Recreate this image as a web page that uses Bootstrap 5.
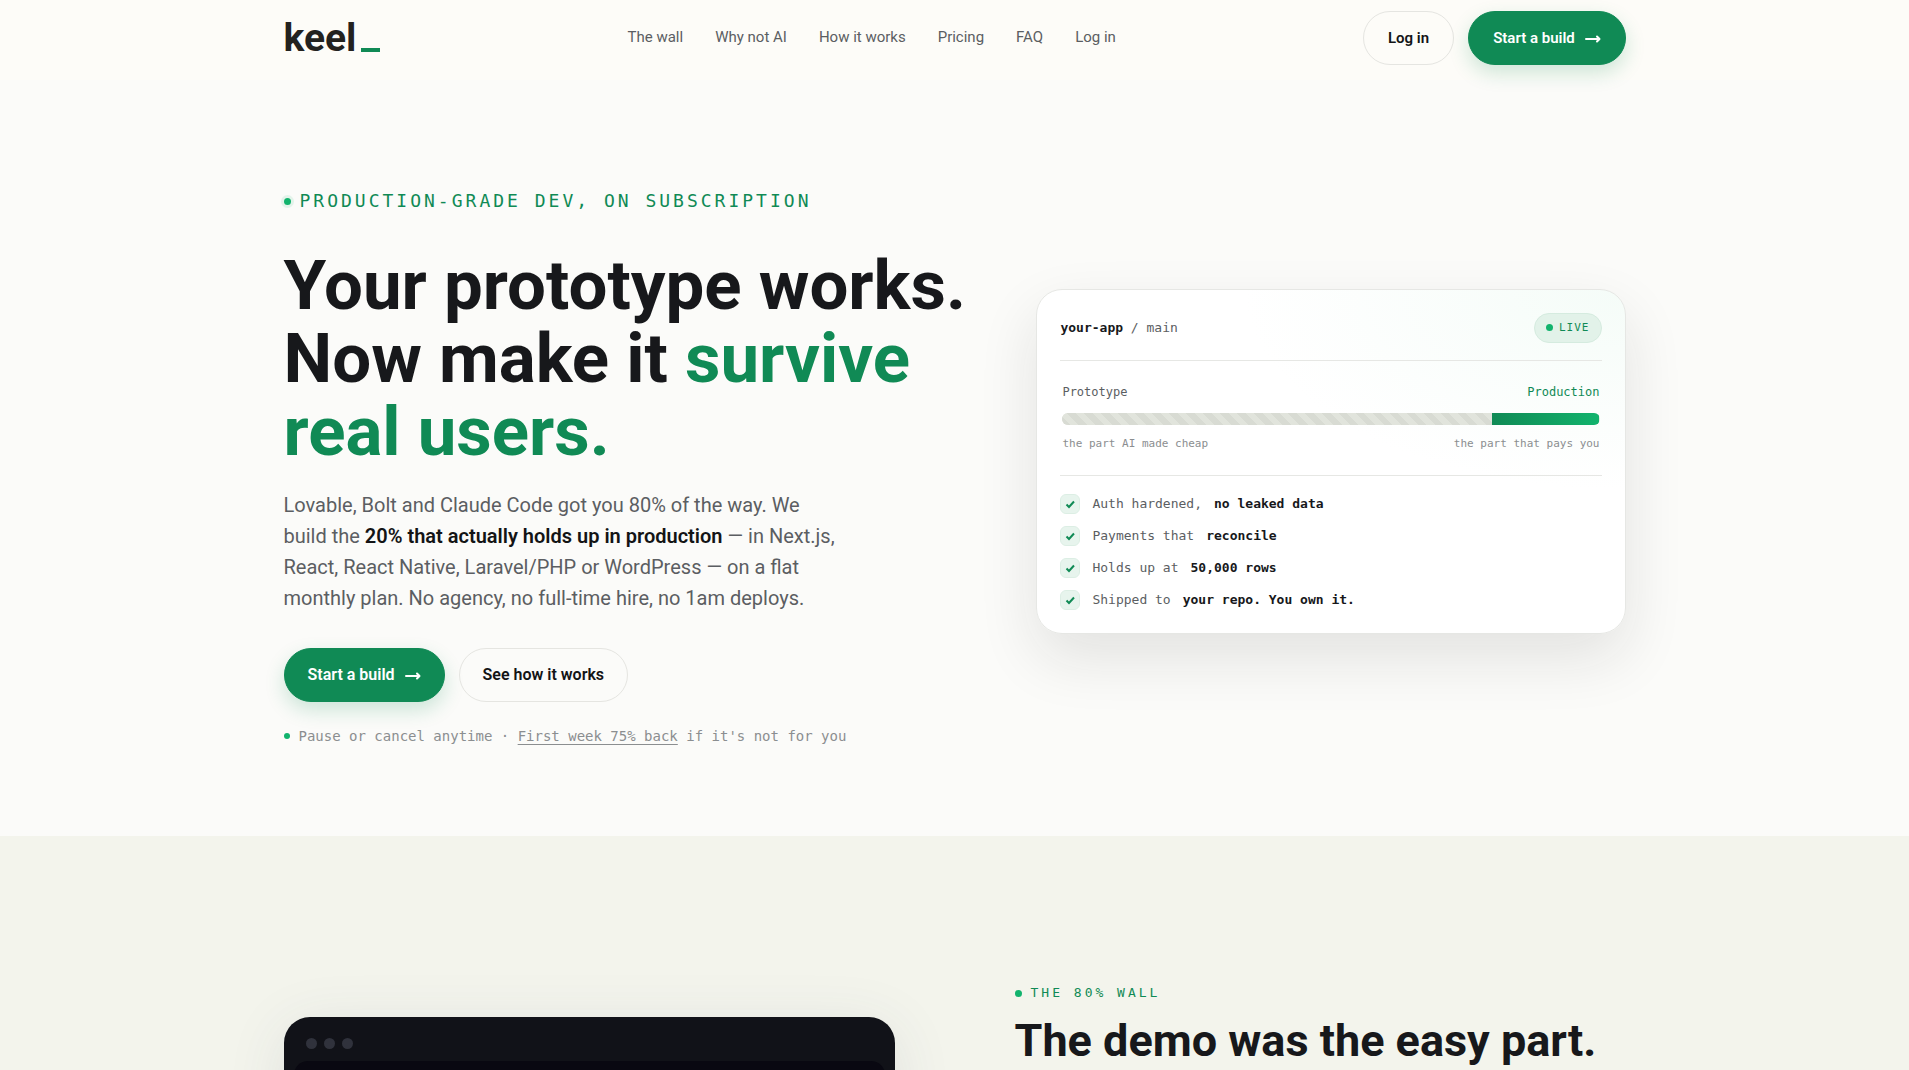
<!DOCTYPE html>
<html lang="en">
<head>
<meta charset="utf-8">
<meta name="viewport" content="width=device-width, initial-scale=1">
<title>keel_</title>
<link href="https://cdn.jsdelivr.net/npm/bootstrap@5.3.0/dist/css/bootstrap.min.css" rel="stylesheet">
<style>
:root { --ink: #17181b; --green: #108a55; --mint: #12b36d; --grey: #5b5e62; --soft: #8b8e90; --line: #e6e7e4; --mono: "DejaVu Sans Mono", "Liberation Mono", monospace; --sans: Roboto, "Open Sans", sans-serif; }
body { font-family: var(--sans); background: #fbfbf9; color: var(--ink); min-height: 100vh; }
.wrap { width: 100%; max-width: 1390px; margin-inline: auto; padding-inline: 24px; }
.topbar { background: #fdfcf8; padding: 11px 0 15px; }
.brand { font-size: 39px; line-height: 54px; font-weight: 700; color: #23221f; text-decoration: none; }
.brand-dash { width: 19px; height: 4px; background: var(--green); margin: 0 0 13px 5px; }
.menu { gap: 32px; padding-bottom: 2px; }
.menu a { font-size: 15px; line-height: 24px; color: var(--grey); text-decoration: none; }
.pill { --bs-btn-padding-x: 24px; --bs-btn-padding-y: 14px; --bs-btn-font-size: 15px; --bs-btn-font-weight: 600; --bs-btn-line-height: 24px; --bs-btn-border-radius: 27px; --bs-btn-color: #131415; --bs-btn-border-color: #e5e5e1; --bs-btn-hover-border-color: #b9bab5; }
.pill-green { --bs-btn-color: #fff; --bs-btn-bg: #108a55; --bs-btn-border-color: #108a55; --bs-btn-hover-color: #fff; --bs-btn-hover-bg: #0d7748; box-shadow: 0 8px 20px rgba(16, 138, 85, .2); }
.pill svg { width: 16px; height: 10px; margin-left: 6px; }
.hero { padding: 95px 0 89px; }
.hero .pill { --bs-btn-font-size: 16px; --bs-btn-padding-x: 23px; }
.hero-grid { display: grid; grid-template-columns: 690fr 590fr; gap: 64px; align-items: center; }
.eyebrow { font-family: var(--mono); font-size: 18px; line-height: 30px; letter-spacing: 3px; color: var(--green); gap: 9px; padding-block: 11px; }
.eyebrow-small { font-size: 13px; line-height: 20px; gap: 9px; padding: 0; }
.dot { width: 7px; height: 7px; border-radius: 50%; background: var(--mint); flex: none; }
.halo { box-shadow: 0 0 0 3px #e3f3ea; }
.dot-note { width: 6px; height: 6px; }
h1 { font-size: 69px; line-height: 73px; font-weight: 700; margin: 22px 0 0; }
h1 em { font-style: normal; color: var(--green); }
.intro { font-size: 20px; line-height: 31px; color: var(--grey); margin: 22px 0 0; }
.intro strong { color: #131415; font-weight: 600; }
.cta { gap: 14px; margin-top: 34px; }
.note { font-family: var(--mono); font-size: 14px; line-height: 22px; color: var(--soft); gap: 9px; margin-top: 23px; }
.note a { color: inherit; text-underline-offset: 3px; }
.status { border: 1px solid var(--line); border-radius: 26px; padding: 23px; font-family: var(--mono); background: radial-gradient(380px 200px at 100% 0, #f5fcf8, #fff); box-shadow: 0 24px 60px rgba(23, 24, 27, .11); }
.status-head { padding-bottom: 17px; border-bottom: 1px solid var(--line); font-size: 13px; line-height: 20px; color: var(--grey); }
.status-head b { color: var(--ink); }
.live { font-size: 11px; line-height: 18px; letter-spacing: 1px; color: var(--green); background: #e2f2e9; border: 1px solid #d5ebdf; border-radius: 15px; padding: 5px 11px; gap: 6px; }
.split { padding: 21px 2px 22px; border-bottom: 1px solid var(--line); font-size: 12px; line-height: 20px; color: var(--grey); }
.split b { font-weight: 400; color: var(--green); }
.meter { height: 12px; border-radius: 6px; margin: 11px 0 10px; background: #e3e6de; }
.meter-old { background: repeating-linear-gradient(45deg, #d8dbd3 0 6px, #e1e4dc 6px 12px); }
.meter-new { background: linear-gradient(90deg, #108a55, #12b36d); }
.split small { font-size: 11px; line-height: 18px; color: var(--soft); }
.checks { gap: 12px; padding-top: 18px; font-size: 13px; line-height: 20px; color: var(--grey); }
.checks li { gap: 12px; }
.checks b { color: var(--ink); }
.checks svg { width: 20px; height: 20px; flex: none; }
.wall { background: #f3f4ec; padding: 147px 0 96px; }
.wall-grid { display: grid; grid-template-columns: 1fr 1fr; gap: 120px; }
.terminal { background: #111218; border-radius: 26px; margin-top: 34px; padding: 21px 10px 10px; min-height: 240px; box-shadow: 0 10px 60px rgba(60, 70, 110, .1); }
.lights { gap: 7px; padding: 0 12px; }
.lights i { width: 11px; height: 11px; border-radius: 50%; background: #30323c; }
.screen { background: #090811; border-radius: 14px; margin-top: 12px; flex: 1; }
h2 { font-size: 45px; line-height: 52px; font-weight: 700; margin: 12px 0 0; }
@media (max-width: 991px) { .hero-grid, .wall-grid { grid-template-columns: 1fr; } .menu { display: none !important; } h1 { font-size: 44px; line-height: 50px; } .intro br { display: none; } }
</style>
</head>
<body>
<header class="topbar">
  <div class="wrap d-flex justify-content-between align-items-center">
    <a class="brand d-flex align-items-end" href="#">keel<span class="brand-dash"></span></a>
    <nav class="menu d-flex" aria-label="Main">
      <a href="#wall">The wall</a><a href="#why">Why not AI</a><a href="#how">How it works</a><a href="#pricing">Pricing</a><a href="#faq">FAQ</a><a href="#login">Log in</a>
    </nav>
    <div class="d-flex cta mt-0">
      <button class="btn pill" type="button">Log in</button>
      <button class="btn pill pill-green" type="button">Start a build <svg viewBox="0 0 16 10" fill="none" stroke="currentColor" stroke-width="2" stroke-linecap="round" stroke-linejoin="round" aria-hidden="true"><path d="M1 5h13M12 2.500l2.500 2.500-2.500 2.500"/></svg></button>
    </div>
  </div>
</header>
<main>
  <section class="hero">
    <div class="wrap hero-grid">
      <div>
        <div class="eyebrow d-flex align-items-center"><span class="dot halo"></span>PRODUCTION-GRADE DEV, ON SUBSCRIPTION</div>
        <h1>Your prototype works.<br>Now make it <em>survive<br>real users.</em></h1>
        <p class="intro">Lovable, Bolt and Claude Code got you 80% of the way. We<br>build the <strong>20% that actually holds up in production</strong> — in Next.js,<br>React, React Native, Laravel/PHP or WordPress — on a flat<br>monthly plan. No agency, no full-time hire, no 1am deploys.</p>
        <div class="cta d-flex flex-wrap">
          <button class="btn pill pill-green" type="button">Start a build <svg viewBox="0 0 16 10" fill="none" stroke="currentColor" stroke-width="2" stroke-linecap="round" stroke-linejoin="round" aria-hidden="true"><path d="M1 5h13M12 2.500l2.500 2.500-2.500 2.500"/></svg></button>
          <button class="btn pill" type="button">See how it works</button>
        </div>
        <div class="note d-flex align-items-center"><span class="dot dot-note"></span><span>Pause or cancel anytime · <a href="#refund">First week 75% back</a> if it's not for you</span></div>
      </div>
      <div class="status">
        <div class="status-head d-flex justify-content-between align-items-center">
          <span><b>your-app</b> / main</span>
          <span class="live d-flex align-items-center"><span class="dot"></span>LIVE</span>
        </div>
        <div class="split">
          <div class="d-flex justify-content-between"><span>Prototype</span><b>Production</b></div>
          <div class="meter d-flex overflow-hidden"><span class="meter-old" style="width:80%"></span><span class="meter-new" style="width:20%"></span></div>
          <div class="d-flex justify-content-between"><small>the part AI made cheap</small><small>the part that pays you</small></div>
        </div>
        <ul class="checks list-unstyled d-flex flex-column mb-0">
          <li class="d-flex"><svg viewBox="0 0 20 20" aria-hidden="true"><rect x=".5" y=".5" width="19" height="19" rx="5.500" fill="#e7f4ed" stroke="#dceee4"/><path d="M6.500 10.500l2.500 2.500 5-5.500" fill="none" stroke="#108a55" stroke-width="2"/></svg><span>Auth hardened,</span><b>no leaked data</b></li>
          <li class="d-flex"><svg viewBox="0 0 20 20" aria-hidden="true"><rect x=".5" y=".5" width="19" height="19" rx="5.500" fill="#e7f4ed" stroke="#dceee4"/><path d="M6.500 10.500l2.500 2.500 5-5.500" fill="none" stroke="#108a55" stroke-width="2"/></svg><span>Payments that</span><b>reconcile</b></li>
          <li class="d-flex"><svg viewBox="0 0 20 20" aria-hidden="true"><rect x=".5" y=".5" width="19" height="19" rx="5.500" fill="#e7f4ed" stroke="#dceee4"/><path d="M6.500 10.500l2.500 2.500 5-5.500" fill="none" stroke="#108a55" stroke-width="2"/></svg><span>Holds up at</span><b>50,000 rows</b></li>
          <li class="d-flex"><svg viewBox="0 0 20 20" aria-hidden="true"><rect x=".5" y=".5" width="19" height="19" rx="5.500" fill="#e7f4ed" stroke="#dceee4"/><path d="M6.500 10.500l2.500 2.500 5-5.500" fill="none" stroke="#108a55" stroke-width="2"/></svg><span>Shipped to</span><b>your repo. You own it.</b></li>
        </ul>
      </div>
    </div>
  </section>
  <section class="wall" id="wall">
    <div class="wrap wall-grid">
      <div class="terminal d-flex flex-column"><div class="lights d-flex"><i></i><i></i><i></i></div><div class="screen"></div></div>
      <div>
        <div class="eyebrow eyebrow-small d-flex align-items-center"><span class="dot"></span>THE 80% WALL</div>
        <h2>The demo was the easy part.</h2>
      </div>
    </div>
  </section>
</main>
<script src="https://cdn.jsdelivr.net/npm/bootstrap@5.3.0/dist/js/bootstrap.bundle.min.js"></script>
</body>
</html>
